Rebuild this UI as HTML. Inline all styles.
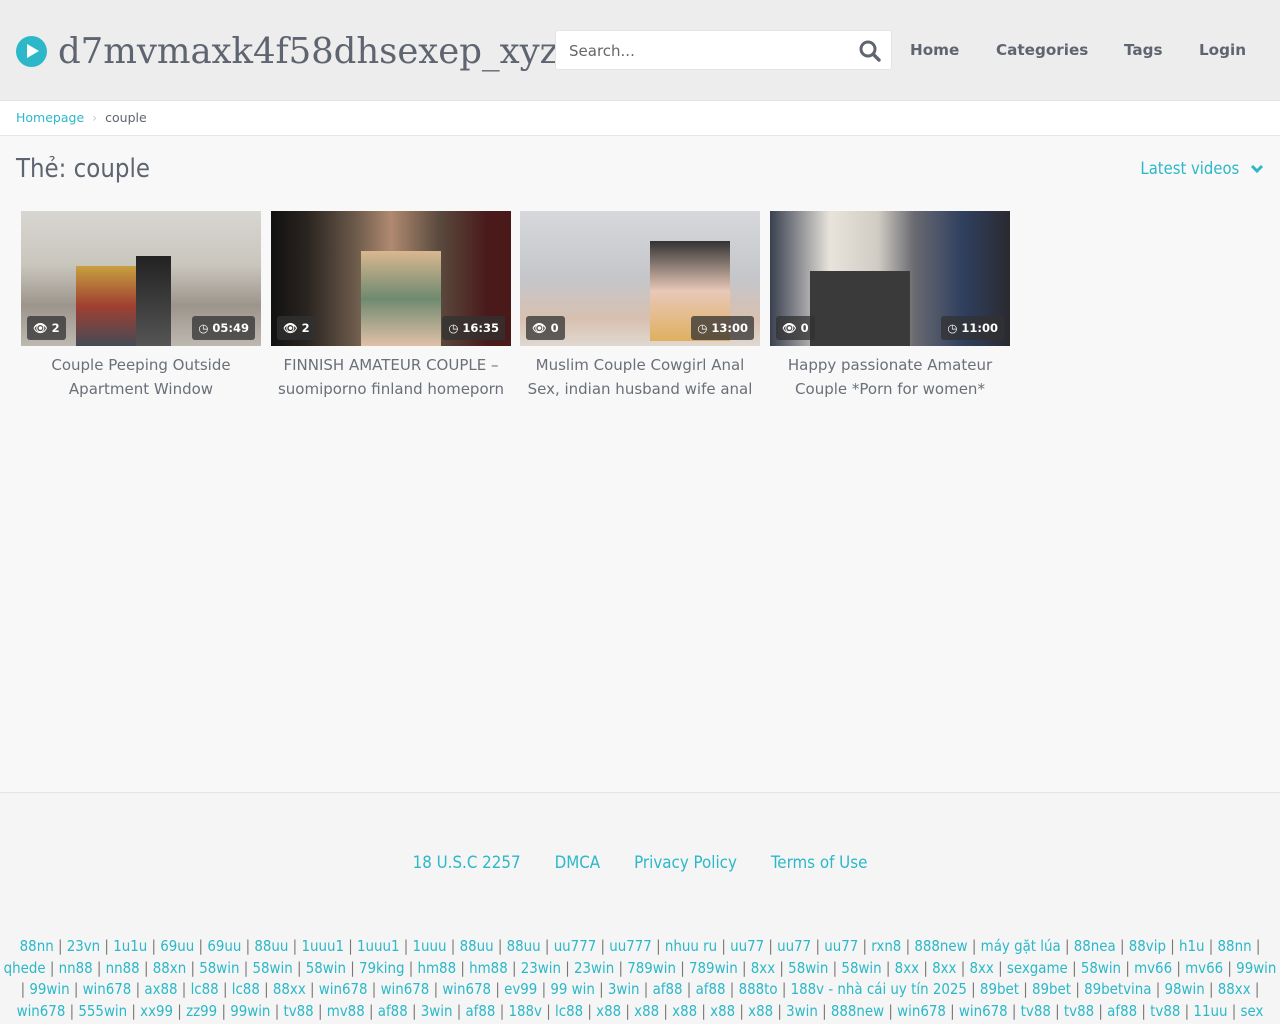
<!DOCTYPE html>
<html><head><meta charset="utf-8"><style>
*{box-sizing:border-box;margin:0;padding:0}
body{width:1280px;height:1024px;overflow:hidden;background:#f8f8f8;font-family:"DejaVu Sans","Liberation Sans",sans-serif;color:#5f6570}
.hdr{height:101px;background:#ededed;border-bottom:1px solid #e2e2e2;position:relative}
.logo{position:absolute;left:16px;top:31px;display:flex;align-items:center}
.play{width:31px;height:31px;border-radius:50%;background:#2cb8c8;position:relative;margin-right:11px}
.play:after{content:"";position:absolute;left:11px;top:8px;border-left:12px solid #fff;border-top:7.5px solid transparent;border-bottom:7.5px solid transparent}
.logo span{font-family:"DejaVu Serif",serif;font-size:35.5px;color:#5f6570;letter-spacing:-0.05px}
.search{position:absolute;left:555px;top:30px;width:337px;height:40px;background:#fff;border:1px solid #e4e4e4;border-radius:3px}
.search span{position:absolute;left:13px;top:11px;font-size:15px;color:#666}
.search svg{position:absolute;right:10px;top:9px}
.nav{position:absolute;top:41px;font-weight:bold;font-size:15.2px;color:#5f6570}
.bc{height:35px;background:#fff;border-bottom:1px solid #e6e6e6;font-size:12.5px;padding:9px 16px;color:#5f6570}
.bc a{color:#2cb8c8;text-decoration:none}
.bc b{font-weight:normal;color:#ccc;margin:0 8px}
h1{position:absolute;left:16px;top:154px;font-weight:normal;font-size:25.5px;font-family:"DejaVu Sans Condensed","DejaVu Sans",sans-serif;color:#5f6570}
.latest{position:absolute;right:16px;top:159px;font-size:16.5px;color:#2cb8c8;font-family:"DejaVu Sans Condensed","DejaVu Sans",sans-serif}
.v{position:absolute;top:211px;width:240px}
.th{height:135px;position:relative;overflow:hidden}
.bd{position:absolute;top:105px;height:24px;background:rgba(50,50,50,.75);color:#fff;font-weight:bold;font-size:11.5px;line-height:24px;border-radius:3px;padding:0 6px}
.t{text-align:center;font-size:15px;line-height:24px;margin-top:7px;color:#6a7078;white-space:nowrap;margin-left:-10px;margin-right:-10px}
.ft{position:absolute;top:792px;left:0;width:1280px;height:232px;border-top:1px solid #e4e4e4;background:#f5f5f5}
.fl{position:absolute;top:59px;width:100%;text-align:center;font-size:16.8px;color:#2cb8c8;font-family:"DejaVu Sans Condensed","DejaVu Sans",sans-serif}
.fl span{margin:0 17px}
.lk{position:absolute;top:143px;width:100%;text-align:center;font-size:14.9px;line-height:21.5px;color:#2cb8c8;font-family:"DejaVu Sans Condensed","DejaVu Sans",sans-serif}
.lk div{white-space:nowrap;margin:0 -40px}
i{font-style:normal;color:#777}
</style></head><body>
<div class="hdr">
<div class="logo"><div class="play"></div><span>d7mvmaxk4f58dhsexep_xyz</span></div>
<div class="search"><span>Search...</span><svg width="22" height="22" viewBox="0 0 22 22"><circle cx="9" cy="9" r="7" fill="none" stroke="#5f6570" stroke-width="3"/><path d="M14 14l6 6" stroke="#5f6570" stroke-width="3.4" stroke-linecap="round"/></svg></div>
<div class="nav" style="left:910px">Home</div>
<div class="nav" style="left:996px">Categories</div>
<div class="nav" style="left:1124px">Tags</div>
<div class="nav" style="left:1199px">Login</div>
</div>
<div class="bc"><a>Homepage</a><b>›</b>couple</div>
<h1>Thẻ: couple</h1>
<div class="latest">Latest videos <svg width="14" height="10" viewBox="0 0 14 10" style="margin-left:6px"><path d="M2 2l5 5 5-5" fill="none" stroke="#2cb8c8" stroke-width="3"/></svg></div>

<div class="v" style="left:21px"><div class="th" style="background:linear-gradient(180deg,#d8d6d0 0,#c9c6be 40%,#9d958c 70%,#bdb8b0 100%)"><div style="position:absolute;left:55px;top:55px;width:60px;height:80px;background:linear-gradient(#c8a040,#a04030,#454a55)"></div><div style="position:absolute;left:115px;top:45px;width:35px;height:90px;background:linear-gradient(#222,#555)"></div><div class="bd" style="left:6px">👁 2</div><div class="bd" style="right:6px">◷ 05:49</div></div><div class="t">Couple Peeping Outside<br>Apartment Window</div></div>
<div class="v" style="left:271px"><div class="th" style="background:linear-gradient(90deg,#111 0,#2a2420 15%,#6b5a4a 35%,#b08a70 50%,#5a4a3e 70%,#4a1a1a 90%)"><div style="position:absolute;left:90px;top:40px;width:80px;height:95px;background:linear-gradient(#d9b890,#6f8a70,#e0c0a8)"></div><div class="bd" style="left:6px">👁 2</div><div class="bd" style="right:6px">◷ 16:35</div></div><div class="t">FINNISH AMATEUR COUPLE –<br>suomiporno finland homeporn</div></div>
<div class="v" style="left:520px"><div class="th" style="background:linear-gradient(180deg,#d6d8dc,#c4c6ca 50%,#d8c0b0 80%,#e0d8d0)"><div style="position:absolute;left:130px;top:30px;width:80px;height:100px;background:linear-gradient(#333,#e8c8b8,#e0b060)"></div><div class="bd" style="left:6px">👁 0</div><div class="bd" style="right:6px">◷ 13:00</div></div><div class="t">Muslim Couple Cowgirl Anal<br>Sex, indian husband wife anal</div></div>
<div class="v" style="left:770px"><div class="th" style="background:linear-gradient(90deg,#3a4050,#e8e4dc 25%,#d0ccc4 45%,#6a6a70 60%,#304060 80%,#2a2a30)"><div style="position:absolute;left:40px;top:60px;width:100px;height:75px;background:#3a3a3a"></div><div class="bd" style="left:6px">👁 0</div><div class="bd" style="right:6px">◷ 11:00</div></div><div class="t">Happy passionate Amateur<br>Couple *Porn for women*</div></div>

<div class="ft">
<div class="fl"><span>18 U.S.C 2257</span><span>DMCA</span><span>Privacy Policy</span><span>Terms of Use</span></div>
<div class="lk">
<div>88nn <i>|</i> 23vn <i>|</i> 1u1u <i>|</i> 69uu <i>|</i> 69uu <i>|</i> 88uu <i>|</i> 1uuu1 <i>|</i> 1uuu1 <i>|</i> 1uuu <i>|</i> 88uu <i>|</i> 88uu <i>|</i> uu777 <i>|</i> uu777 <i>|</i> nhuu ru <i>|</i> uu77 <i>|</i> uu77 <i>|</i> uu77 <i>|</i> rxn8 <i>|</i> 888new <i>|</i> máy gặt lúa <i>|</i> 88nea <i>|</i> 88vip <i>|</i> h1u <i>|</i> 88nn <i>|</i></div>
<div>qhede <i>|</i> nn88 <i>|</i> nn88 <i>|</i> 88xn <i>|</i> 58win <i>|</i> 58win <i>|</i> 58win <i>|</i> 79king <i>|</i> hm88 <i>|</i> hm88 <i>|</i> 23win <i>|</i> 23win <i>|</i> 789win <i>|</i> 789win <i>|</i> 8xx <i>|</i> 58win <i>|</i> 58win <i>|</i> 8xx <i>|</i> 8xx <i>|</i> 8xx <i>|</i> sexgame <i>|</i> 58win <i>|</i> mv66 <i>|</i> mv66 <i>|</i> 99win</div>
<div><i>|</i> 99win <i>|</i> win678 <i>|</i> ax88 <i>|</i> lc88 <i>|</i> lc88 <i>|</i> 88xx <i>|</i> win678 <i>|</i> win678 <i>|</i> win678 <i>|</i> ev99 <i>|</i> 99 win <i>|</i> 3win <i>|</i> af88 <i>|</i> af88 <i>|</i> 888to <i>|</i> 188v - nhà cái uy tín 2025 <i>|</i> 89bet <i>|</i> 89bet <i>|</i> 89betvina <i>|</i> 98win <i>|</i> 88xx <i>|</i></div>
<div>win678 <i>|</i> 555win <i>|</i> xx99 <i>|</i> zz99 <i>|</i> 99win <i>|</i> tv88 <i>|</i> mv88 <i>|</i> af88 <i>|</i> 3win <i>|</i> af88 <i>|</i> 188v <i>|</i> lc88 <i>|</i> x88 <i>|</i> x88 <i>|</i> x88 <i>|</i> x88 <i>|</i> x88 <i>|</i> 3win <i>|</i> 888new <i>|</i> win678 <i>|</i> win678 <i>|</i> tv88 <i>|</i> tv88 <i>|</i> af88 <i>|</i> tv88 <i>|</i> 11uu <i>|</i> sex</div>
</div>
</div>
</body></html>
